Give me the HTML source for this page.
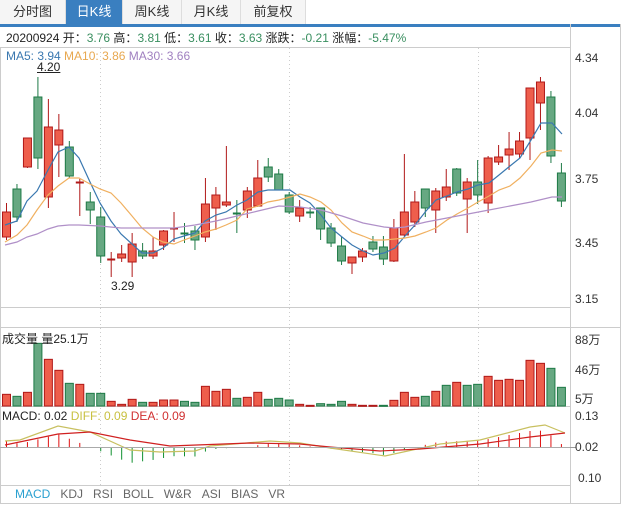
<!DOCTYPE html>
<html><head><meta charset="utf-8"><style>
body{margin:0;width:623px;height:506px;background:#fff;overflow:hidden;font-family:"Liberation Sans","Noto Sans CJK SC",sans-serif;position:relative}
.tabs{position:absolute;left:0;top:0;height:24px;width:620px;border-bottom:3px solid #3a7fc0}
.tab{position:absolute;top:0;height:24px;line-height:24px;font-size:13px;color:#333;text-align:center;background:#f5f5f5;border-right:1px solid #ddd}
.tab.a{background:#3a7fc0;color:#fff}
.t{position:absolute;font-size:12px;white-space:nowrap}
</style></head><body>
<div class="tabs">
<div class="tab" style="left:0;width:65px">分时图</div>
<div class="tab a" style="left:66px;width:56px">日K线</div>
<div class="tab" style="left:123px;width:58px">周K线</div>
<div class="tab" style="left:182px;width:58px">月K线</div>
<div class="tab" style="left:241px;width:64px">前复权</div>
</div>
<svg id="s" width="623" height="506" style="position:absolute;left:0;top:0"></svg>
<div class="t" style="left:6px;top:29px;color:#222">20200924 开：<span style="color:#3a8f60">3.76</span> 高：<span style="color:#3a8f60">3.81</span> 低：<span style="color:#3a8f60">3.61</span> 收：<span style="color:#3a8f60">3.63</span> 涨跌：<span style="color:#3a8f60">-0.21</span> 涨幅：<span style="color:#3a8f60">-5.47%</span></div>
<div class="t" style="left:6px;top:49px"><span style="color:#3a78b0">MA5: 3.94</span> <span style="color:#e8a850">MA10: 3.86</span> <span style="color:#a080c0">MA30: 3.66</span></div>
<div class="t" style="left:37px;top:60px;color:#222;text-decoration:underline">4.20</div>
<div class="t" style="left:111px;top:279px;color:#222">3.29</div>
<div class="t" style="left:575px;top:51px;color:#333">4.34</div>
<div class="t" style="left:575px;top:106px;color:#333">4.04</div>
<div class="t" style="left:575px;top:172px;color:#333">3.75</div>
<div class="t" style="left:575px;top:236px;color:#333">3.45</div>
<div class="t" style="left:575px;top:292px;color:#333">3.15</div>
<div class="t" style="left:575px;top:331px;color:#333">88万</div>
<div class="t" style="left:575px;top:361px;color:#333">46万</div>
<div class="t" style="left:575px;top:390px;color:#333">5万</div>
<div class="t" style="left:575px;top:409px;color:#333">0.13</div>
<div class="t" style="left:575px;top:440px;color:#333">0.02</div>
<div class="t" style="left:578px;top:471px;color:#333">0.10</div>
<div class="t" style="left:2px;top:330px;color:#222">成交量 量25.1万</div>
<div class="t" style="left:2px;top:409px"><span style="color:#222">MACD: 0.02</span> <span style="color:#c8c040">DIFF: 0.09</span> <span style="color:#d03030">DEA: 0.09</span></div>
<div class="t" style="left:15px;top:487px;color:#666"><span style="color:#2aa0d0">MACD</span>&nbsp;&nbsp;&nbsp;KDJ&nbsp;&nbsp;&nbsp;RSI&nbsp;&nbsp;&nbsp;BOLL&nbsp;&nbsp;&nbsp;W&amp;R&nbsp;&nbsp;&nbsp;ASI&nbsp;&nbsp;&nbsp;BIAS&nbsp;&nbsp;&nbsp;VR</div>
<script>
var s=document.getElementById('s'),h='';
function L(x1,y1,x2,y2,c,w,d){h+='<line x1="'+x1+'" y1="'+y1+'" x2="'+x2+'" y2="'+y2+'" stroke="'+c+'" stroke-width="'+(w||1)+'"'+(d?' stroke-dasharray="'+d+'"':'')+'/>';}
// frame
L(0.5,47,0.5,504,'#ccc');L(570.5,24,570.5,504,'#ccc');L(620.5,24,620.5,504,'#ccc');
L(0,47.5,570,47.5,'#ccc');L(0,307.5,570,307.5,'#ccc');L(0,327.5,620,327.5,'#ccc');L(0,406.5,570,406.5,'#ccc');L(0,485.5,570,485.5,'#ccc');L(0,503.5,620,503.5,'#ccc');
L(570,447.5,576,447.5,'#999');
[100.5,289.5,478.5].forEach(function(x){L(x,48,x,485,'#ccc',1,'1,3');});
var C=[[1,212,237,203,240],[0,189,217,184,222],[1,138,167,138,168],[0,97,158,77,169],[1,127,197,99,208],[1,130,145,114,177],[0,147,176,141,178],[1,182,184,179,216],[0,202,210,192,224],[0,217,256,207,263],[1,259,261,252,277],[1,254,258,245,262],[1,244,262,233,277],[0,251,256,243,259],[1,251,256,237,259],[1,231,245,230,250],[1,228,229,212,242],[0,233,234,223,243],[0,231,240,226,250],[1,204,237,178,242],[1,195,208,187,230],[1,202,205,146,207],[0,213,214,200,233],[1,191,210,187,218],[1,178,206,160,207],[0,167,177,158,182],[0,174,190,169,190],[0,195,212,192,214],[1,208,216,200,222],[0,212,213,207,218],[0,208,229,208,240],[0,228,243,223,247],[0,246,261,237,265],[1,257,263,257,274],[1,251,257,248,262],[0,242,249,236,252],[0,247,259,236,265],[1,228,261,219,262],[1,212,235,154,236],[1,202,222,191,227],[0,189,208,189,217],[1,191,210,188,233],[1,187,197,169,201],[0,169,193,168,196],[1,182,199,178,233],[0,182,195,160,204],[1,158,203,156,213],[1,157,162,145,165],[1,149,155,132,170],[1,141,154,132,158],[1,88,138,88,160],[1,82,103,77,130],[0,97,156,91,163],[0,173,201,163,207]];
var V=[283,289,277,130,178,211,250,253,280,280,304,313,298,307,307,300,300,304,307,259,274,268,295,292,277,298,295,300,313,316,311,313,304,313,316,316,316,301,277,292,289,274,256,247,256,253,229,241,238,241,181,190,205,262];
var vc=[1,0,1,0,1,1,0,1,0,0,1,1,1,0,1,1,1,0,0,1,1,1,0,1,1,0,0,0,1,1,0,0,0,1,1,1,0,1,1,1,0,1,0,1,0,0,1,1,1,1,1,1,0,0];
C.forEach(function(c,i){var x=6.5+i*10.47,r=c[0],sc=r?'#b01818':'#1e7a46',fc=r?'#ee5e4c':'#67a882';
L(x,c[3],x,c[4],sc);var hh=Math.max(c[2]-c[1],1);
if(hh<=2)L(x-4,c[1]+0.5,x+4,c[1]+0.5,sc,2);else h+='<rect x="'+(x-4)+'" y="'+c[1]+'" width="8" height="'+hh+'" fill="'+fc+'" stroke="'+sc+'"/>';});
V.forEach(function(v,i){var x=6.5+i*10.47,r=vc[i],y=300+v/3;h+='<rect x="'+(x-4)+'" y="'+y+'" width="8" height="'+Math.max(406-y,1)+'" fill="'+(r?'#ee5e4c':'#67a882')+'" stroke="'+(r?'#b01818':'#1e7a46')+'"/>';});
function P(a,c){h+='<polyline fill="none" stroke="'+c+'" stroke-width="1.2" points="'+a+'"/>';}
P('5,225 17,221 27,201 37,191 48,170 58,152 69,147 79,158 90,182 100,203 111,221 121,234 132,244 142,253 153,253 163,248 174,239 184,236 195,233 205,221 216,215 226,212 237,205 247,200 258,192 268,190 279,190 290,190 300,197 310,203 321,215 331,228 342,237 352,245 363,251 373,255 384,253 395,248 405,236 415,225 426,211 436,200 447,196 457,192 468,189 478,185 489,183 499,175 510,166 520,158 531,140 541,123 552,123 562,134','#3a78b0');
P('5,242 17,235 27,225 37,210 48,195 58,186 69,178 79,178 90,184 100,189 111,193 121,203 132,216 142,228 153,237 163,242 174,244 184,240 195,236 205,232 216,229 226,225 237,220 247,209 258,206 268,202 279,200 290,197 300,194 310,197 321,202 331,210 342,223 352,232 363,236 373,240 384,240 395,239 405,238 415,236 426,232 436,228 447,220 457,214 468,208 478,202 489,196 499,190 510,186 520,178 531,166 541,153 552,150 562,151','#f0b060');
P('5,245 17,242 27,237 37,234 48,229 58,226 69,225 79,225 100,226 121,228 153,228 174,228 195,225 216,221 237,216 258,211 279,206 300,207 321,210 342,216 363,223 384,227 395,228 405,227 426,222 447,218 468,214 489,210 510,206 531,202 552,197 562,197','#b090c8');
// MACD
var D=[[5,441],[20,440],[58,426],[90,432],[130,450],[160,452],[195,451],[210,446],[270,441],[300,443],[330,448],[385,456],[440,444],[480,440],[530,427],[545,425],[565,433]];
var E=[[5,445],[58,434],[90,432],[130,440],[170,446],[250,443],[300,444],[330,447],[380,451],[420,449],[480,444],[530,437],[565,433]];
function I(a,x){for(var k=0;k<a.length-1;k++)if(x>=a[k][0]&&x<=a[k+1][0]){var t=(x-a[k][0])/(a[k+1][0]-a[k][0]);return a[k][1]+t*(a[k+1][1]-a[k][1]);}return a[a.length-1][1];}
for(var i=0;i<54;i++){var x=6.5+i*10.47,d=(I(E,x)-I(D,x))*1.6;if(Math.abs(d)<0.5)continue;L(x,447,x,447-d,d>0?'#e01010':'#109030');}
P(D.map(function(p){return p.join(',')}).join(' '),'#c8c060');
P(E.map(function(p){return p.join(',')}).join(' '),'#d02020');
L(0,447.5,570,447.5,'#aaa');
s.innerHTML=h;
</script>
</body></html>
